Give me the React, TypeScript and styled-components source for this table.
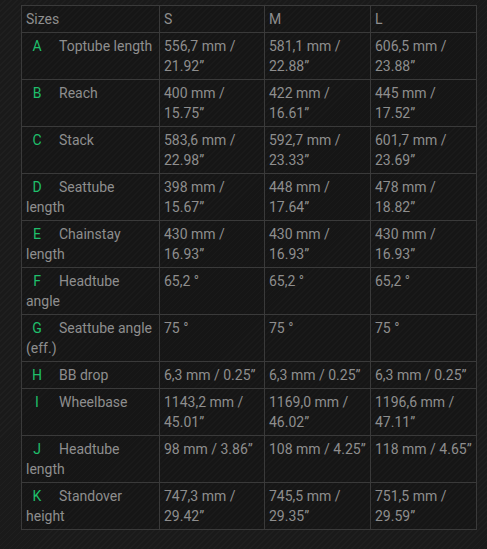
import styled, { createGlobalStyle } from "styled-components";

interface Row {
  letter: string;
  label: string;
  values: string[];
}

const rows: Row[] = [
  { letter: "A", label: "Toptube length", values: ["556,7 mm / 21.92”", "581,1 mm / 22.88”", "606,5 mm / 23.88”"] },
  { letter: "B", label: "Reach", values: ["400 mm / 15.75”", "422 mm / 16.61”", "445 mm / 17.52”"] },
  { letter: "C", label: "Stack", values: ["583,6 mm / 22.98”", "592,7 mm / 23.33”", "601,7 mm / 23.69”"] },
  { letter: "D", label: "Seattube length", values: ["398 mm / 15.67”", "448 mm / 17.64”", "478 mm / 18.82”"] },
  { letter: "E", label: "Chainstay length", values: ["430 mm / 16.93”", "430 mm / 16.93”", "430 mm / 16.93”"] },
  { letter: "F", label: "Headtube angle", values: ["65,2 °", "65,2 °", "65,2 °"] },
  { letter: "G", label: "Seattube angle (eff.)", values: ["75 °", "75 °", "75 °"] },
  { letter: "H", label: "BB drop", values: ["6,3 mm / 0.25”", "6,3 mm / 0.25”", "6,3 mm / 0.25”"] },
  { letter: "I", label: "Wheelbase", values: ["1143,2 mm / 45.01”", "1169,0 mm / 46.02”", "1196,6 mm / 47.11”"] },
  { letter: "J", label: "Headtube length", values: ["98 mm / 3.86”", "108 mm / 4.25”", "118 mm / 4.65”"] },
  { letter: "K", label: "Standover height", values: ["747,3 mm / 29.42”", "745,5 mm / 29.35”", "751,5 mm / 29.59”"] },
];

const sizes = ["S", "M", "L"];

const GlobalStyle = createGlobalStyle`
  html, body {
    margin: 0;
  }
  body {
    min-height: 549px;
    background-color: #1b1b1b;
    background-image: repeating-linear-gradient(
      135deg,
      #1a1a1a 0px,
      #1a1a1a 3px,
      #1f1f1f 3px,
      #1f1f1f 4.25px
    );
    font-family: Roboto, "Liberation Sans", sans-serif;
  }
`;

const Page = styled.div`
  padding: 5px 11px 20px 21px;
`;

const Table = styled.table`
  width: 455px;
  table-layout: fixed;
  border-collapse: collapse;
  background: rgba(0, 0, 0, 0.15);
  color: #8e8e8e;
  font-size: 14px;
  line-height: 20px;
`;

const Col = styled.col<{ $width: number }>`
  width: ${({ $width }) => $width}px;
`;

const Cell = styled.td`
  border: 1px solid #3a3a3a;
  padding: 3px 4px;
  vertical-align: top;
  text-align: left;
  font-weight: 400;
`;

const HeadCell = styled(Cell).attrs({ as: "th" })``;

const Letter = styled.span`
  display: inline-block;
  width: 22px;
  margin-right: 11px;
  text-align: center;
  color: #1fbf6b;
`;

export default function App() {
  return (
    <Page>
      <GlobalStyle />
      <Table>
        <colgroup>
          <Col $width={138} />
          <Col $width={105} />
          <Col $width={106} />
          <Col $width={106} />
        </colgroup>
        <thead>
          <tr>
            <HeadCell>Sizes</HeadCell>
            {sizes.map((s) => (
              <HeadCell key={s}>{s}</HeadCell>
            ))}
          </tr>
        </thead>
        <tbody>
          {rows.map((row) => (
            <tr key={row.letter}>
              <Cell>
                <Letter>{row.letter}</Letter>
                {row.label}
              </Cell>
              {row.values.map((v, idx) => (
                <Cell key={idx}>{v}</Cell>
              ))}
            </tr>
          ))}
        </tbody>
      </Table>
    </Page>
  );
}
